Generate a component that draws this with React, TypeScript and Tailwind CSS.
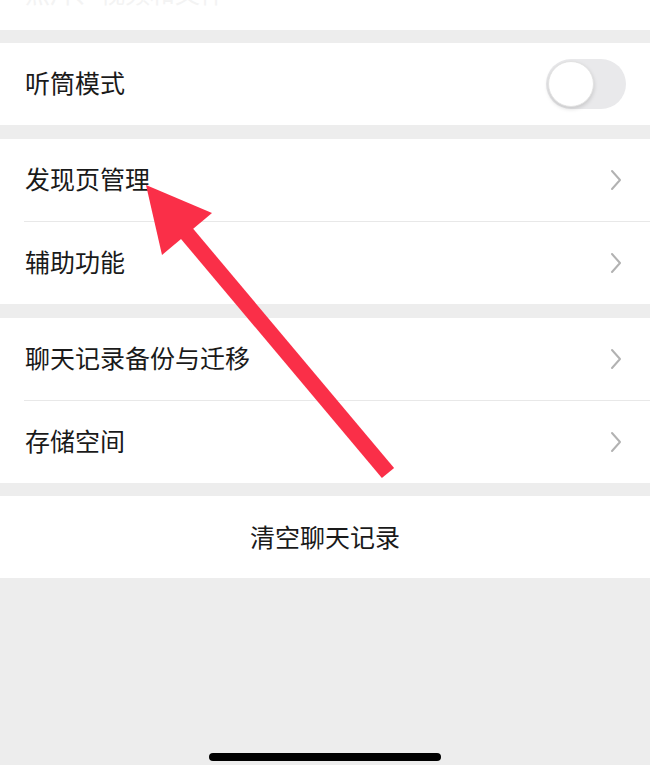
import React from "react";

const font = { fontFamily: '"Noto Sans CJK SC", "Noto Sans", sans-serif' };

function Chevron() {
  return (
    <svg width="12" height="22" viewBox="0 0 12 22" fill="none" className="shrink-0">
      <path d="M2 2 L10 11 L2 20" stroke="#b2b2b2" strokeWidth="2" strokeLinecap="round" strokeLinejoin="round" />
    </svg>
  );
}

function Row({ label, divider }: { label: string; divider?: boolean }) {
  return (
    <div className="relative">
      {divider && <div className="ml-6 h-px bg-[#e8e8e8]" />}
      <div className="flex h-[82px] items-center justify-between pl-[25px] pr-[28px]">
        <span className="-mt-[3px] text-[25px] leading-none text-[#1a1a1a]">{label}</span>
        <Chevron />
      </div>
    </div>
  );
}

export default function App() {
  return (
    <div className="relative flex min-h-[765px] w-[650px] flex-col overflow-hidden bg-[#ededed]" style={font}>
      {/* top partial row */}
      <div className="h-[30px] overflow-hidden bg-white">
        <div className="-mt-[23px] flex items-center pl-[25px]">
          <span className="text-[25px] leading-[30px] text-[#f3f3f3]">照片、视频和文件</span>
        </div>
      </div>

      <div className="mt-[13px] flex h-[82px] items-center justify-between bg-white pl-[25px] pr-[24px]">
        <span className="-mt-[3px] text-[25px] leading-none text-[#1a1a1a]">听筒模式</span>
        <div className="relative h-[50px] w-[80px] rounded-full bg-[#e9e9eb]">
          <div className="absolute left-[2px] top-[2px] h-[46px] w-[46px] rounded-full border border-[#e2e2e2] bg-white shadow-[0_2px_4px_rgba(0,0,0,0.15)]" />
        </div>
      </div>

      <div className="mt-[14px] bg-white">
        <Row label="发现页管理" />
        <Row label="辅助功能" divider />
      </div>

      <div className="mt-[14px] bg-white">
        <Row label="聊天记录备份与迁移" />
        <Row label="存储空间" divider />
      </div>

      <div className="mt-[13px] flex h-[82px] items-center justify-center bg-white">
        <span className="-mt-[2px] text-[25px] leading-none text-[#1a1a1a]">清空聊天记录</span>
      </div>

      <div className="flex flex-1 items-end justify-center pb-[4px]">
        <div className="h-[8px] w-[232px] rounded-full bg-black" />
      </div>

      {/* annotation arrow overlay */}
      <svg className="pointer-events-none absolute left-0 top-0" width="650" height="765" viewBox="0 0 650 765">
        <polygon points="187.5,222 394.1,467.9 381.9,478.1 175.3,232.2" fill="#fa2f48" />
        <polygon points="146,185 212,213 162,255" fill="#fa2f48" />
      </svg>
    </div>
  );
}
